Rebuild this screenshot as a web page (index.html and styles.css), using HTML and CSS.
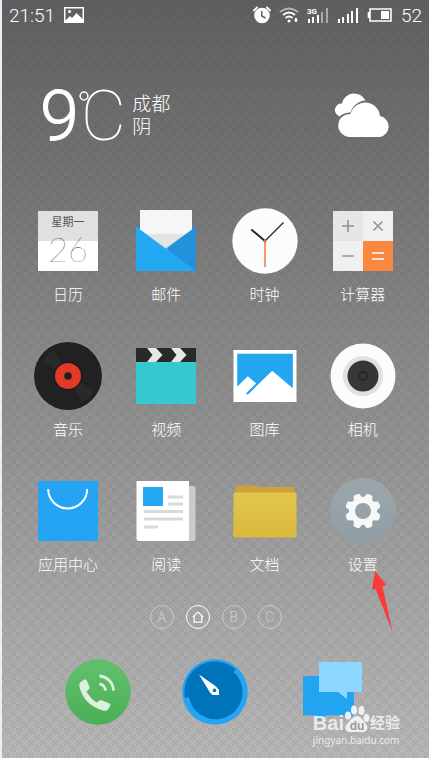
FILE: index.html
```
<!DOCTYPE html>
<html lang="zh-CN">
<head>
    <meta charset="UTF-8">
    <meta name="viewport" content="width=device-width, initial-scale=1.0">
    <title>桌面</title>
    <link rel="stylesheet" href="styles.css">
</head>
<body>
<div class="phone">

    <header class="status-bar">
        <span>21:51</span>
        <svg class="status-image" width="20" height="16" viewBox="0 0 20 16">
            <path fill="#fff" fill-rule="evenodd" d="M0 0h20v16H0zM1.500 1.500v12L6 9l2 2 4.500-5 6 6V1.500z"/>
            <circle cx="5.500" cy="4.500" r="1.500" fill="#fff"/>
        </svg>
        <div class="status-icons">
            <svg width="18" height="18" viewBox="0 0 18 18">
                <circle cx="9" cy="9.500" r="7.800" fill="#fff"/>
                <path d="M1 4.500 4 1.500M17 4.500l-3-3" stroke="#fff" stroke-width="1.800" stroke-linecap="round"/>
                <path d="M8.800 5v5l3.700 2" fill="none" stroke="#646464" stroke-width="1.500"/>
            </svg>
            <svg width="20" height="16" viewBox="0 0 20 16" fill="none" stroke="#fff" stroke-width="1.800">
                <path d="M1 5Q10-2 19 5" opacity=".55"/>
                <path d="M4 8Q10 3 16 8"/>
                <path d="M6.500 11Q10 8 13.500 11"/>
                <circle cx="10" cy="14" r="1.500" fill="#fff" stroke="none"/>
                <path d="M15 13h4l-2 2.500zM16 11h2v2h-2z" fill="#fff" stroke="none"/>
            </svg>
            <svg width="22" height="18" viewBox="0 0 22 18" fill="#fff">
                <text x="0" y="8" class="net-type">3G</text>
                <path d="M1 13h2v4H1zM5 11h2v6H5zM10 9h2v8h-2z"/>
                <path d="M14 6h2v11h-2zM19 2h2v15h-2z" opacity=".45"/>
            </svg>
            <svg width="22" height="18" viewBox="0 0 22 18" fill="#fff">
                <path d="M1 13h2v4H1zM5 11h2v6H5zM10 8h2v9h-2zM14 5h2v12h-2zM19 2h2v15h-2z"/>
            </svg>
            <svg width="26" height="16" viewBox="0 0 26 16">
                <path d="M3 2h21v12H3zM1.500 5v6" fill="none" stroke="#fff" stroke-width="1.600"/>
                <path fill="#fff" d="M14 4h8v8h-8z"/>
            </svg>
            <span>52</span>
        </div>
    </header>

    <section class="weather">
        <div class="temp">9</div>
        <svg class="degree" width="10" height="10" viewBox="0 0 10 10">
            <circle cx="5" cy="5" r="3.900" fill="none" stroke="#fff" stroke-width="1.500"/>
        </svg>
        <div class="unit">C</div>
        <div class="place">成都<br>阴</div>
        <svg class="cloud" width="58" height="48" viewBox="0 0 58 48">
            <path fill="#fff" d="M5 24a6.500 6.500 0 0 1 3-12.500A12.500 12.500 0 0 1 31.500 8.500C25 9 19 13 16.500 20.500 12 20.500 8.500 22 5.500 24.500z"/>
            <path fill="#fff" d="M15 45A11.500 11.500 0 0 1 16.500 22 15 15 0 0 1 46 24 10.700 10.700 0 0 1 46 45z"/>
        </svg>
    </section>

    <main class="apps">
        <a class="app" href="#">
            <svg viewBox="0 0 68 68">
                <path fill="#fff" d="M4 4h60v60H4z"/>
                <path fill="#e0e0e0" d="M4 4h60v30H4z"/>
                <text x="34" y="19" class="cal-week">星期一</text>
                <text x="34" y="55" class="cal-day">26</text>
            </svg>
            <span>日历</span>
        </a>
        <a class="app" href="#">
            <svg viewBox="0 0 68 68">
                <path fill="#2196d9" d="M4 20h60v44H4z"/>
                <path fill="#f5f7f7" d="M8 3h52v40H8z"/>
                <path fill="#e3e3e3" d="M8 27h52v16H8z"/>
                <path fill="#2492da" d="M34 41.500 64 19.500V64z"/>
                <path fill="#22a9f2" d="M4 19.500 64 64H4z"/>
            </svg>
            <span>邮件</span>
        </a>
        <a class="app" href="#">
            <svg viewBox="0 0 68 68">
                <circle cx="34" cy="34" r="32.700" fill="#fbfdfc"/>
                <path d="M34 34v26" stroke="#f09068" stroke-width="1.800"/>
                <path d="M20.300 22.500 34 34" stroke="#222" stroke-width="2"/>
                <path d="M34 34 52.500 15.500" stroke="#333" stroke-width="1.400"/>
                <circle cx="34" cy="34" r="1.500" fill="#e06a38"/>
            </svg>
            <span>时钟</span>
        </a>
        <a class="app" href="#">
            <svg viewBox="0 0 68 68">
                <path fill="#f0f0f0" d="M4 4h60v60H4z"/>
                <path fill="#e6e6e6" d="M4 4h30v30H4z"/>
                <path fill="#f98840" d="M34 34h30v30H34z"/>
                <path d="M13 19h12M19 13v12M13 49h12M44.500 14.500l9 9M53.500 14.500l-9 9" stroke="#8f979c" stroke-width="1.700"/>
                <path d="M43 46h12M43 52h12" stroke="#fff" stroke-width="1.500"/>
            </svg>
            <span>计算器</span>
        </a>

        <a class="app" href="#">
            <svg viewBox="0 0 68 68">
                <circle cx="34" cy="34" r="34" fill="#212121"/>
                <path fill="#292929" d="M34 34 8.500 19.500A30 30 0 0 1 20 8zM34 34 48 61A30 30 0 0 0 60 48z"/>
                <circle cx="34" cy="34" r="14" fill="#181818"/>
                <circle cx="34" cy="34" r="13" fill="#e23a28"/>
                <circle cx="34" cy="34" r="3.800" fill="#212121"/>
            </svg>
            <span>音乐</span>
        </a>
        <a class="app" href="#">
            <svg viewBox="0 0 68 68">
                <path fill="#36c9d0" d="M4 19h60v43H4z"/>
                <path fill="#292927" d="M4 6h60v14H4z"/>
                <path fill="#e6e6e4" d="M15 6h9l6.500 7-6.500 7h-9l5.500-7zM39 6h9l6.500 7-6.500 7h-9l5.500-7z"/>
            </svg>
            <span>视频</span>
        </a>
        <a class="app" href="#">
            <svg viewBox="0 0 68 68">
                <path fill="#fff" d="M2.500 8h63v52h-63z"/>
                <path fill="#22a6f0" d="M6.200 11.700h55.600v34.600L41.200 28.700 16.500 53l-1.300-1.700 10-10-8.400-7L6.200 44.700z"/>
            </svg>
            <span>图库</span>
        </a>
        <a class="app" href="#">
            <svg viewBox="0 0 68 68">
                <circle cx="34" cy="34" r="32.500" fill="#fbfcfc"/>
                <circle cx="34" cy="34" r="20" fill="#e2e0e0"/>
                <circle cx="34" cy="34" r="15.500" fill="#373737"/>
                <circle cx="34" cy="34" r="4" fill="none" stroke="#222" stroke-width="1.500"/>
            </svg>
            <span>相机</span>
        </a>

        <a class="app" href="#">
            <svg viewBox="0 0 68 68">
                <rect x="4" y="4" width="60" height="60" rx="1" fill="#24a4f2"/>
                <path d="M14.200 12a19.500 19.500 0 0 0 39 0" fill="none" stroke="#fff" stroke-width="2"/>
            </svg>
            <span>应用中心</span>
        </a>
        <a class="app" href="#">
            <svg viewBox="0 0 68 68">
                <rect x="50" y="9" width="13.500" height="55" rx="2" fill="#c9cccb"/>
                <path fill="#fff" d="M4.500 4H57v60H6.500a2 2 0 0 1-2-2z"/>
                <path fill="#24a9f2" d="M11 10h20v19H11z"/>
                <path d="M36 20h15M36 27h15M12 34.500h39M12 42h39M12 50h14" stroke="#dadada" stroke-width="2.800"/>
            </svg>
            <span>阅读</span>
        </a>
        <a class="app" href="#">
            <svg viewBox="0 0 68 68">
                <defs>
                    <linearGradient id="folder" x2="0" y2="1">
                        <stop stop-color="#e2c64c"/>
                        <stop offset="1" stop-color="#d9b93c"/>
                    </linearGradient>
                </defs>
                <path fill="#cda23a" d="M4.500 9.500q0-1 1-1H26l2 1.500h34q1.500 0 1.500 1.500V20h-59z"/>
                <rect x="2.500" y="15.500" width="63" height="45" rx="1" fill="url(#folder)"/>
            </svg>
            <span>文档</span>
        </a>
        <a class="app" href="#">
            <svg viewBox="0 0 68 68">
                <defs>
                    <linearGradient id="settings" x2="0" y2="1">
                        <stop stop-color="#9ba6ac"/>
                        <stop offset="1" stop-color="#919da5"/>
                    </linearGradient>
                </defs>
                <circle cx="34" cy="34" r="33" fill="url(#settings)"/>
                <g fill="#f7f8f8" transform="translate(34 34) rotate(22.500)">
                    <path id="teeth" d="M-4.500-13-3-17.500Q0-18.500 3-17.500L4.500-13V13L3 17.500Q0 18.500-3 17.500L-4.500 13z"/>
                    <use href="#teeth" transform="rotate(45)"/>
                    <use href="#teeth" transform="rotate(90)"/>
                    <use href="#teeth" transform="rotate(135)"/>
                    <circle r="14"/>
                </g>
                <circle cx="34" cy="34" r="8" fill="#96a1a8"/>
            </svg>
            <span>设置</span>
            <svg class="pointer" viewBox="0 0 22 62">
                <path fill="#fb3b3a" d="M4 0 15.500 14l-4 1.200L21.500 61 4.500 18 1 19z"/>
            </svg>
        </a>
    </main>

    <nav class="pages">
        <button class="page">A</button>
        <button class="page active" aria-label="主屏">
            <svg width="12" height="12" viewBox="0 0 12 12">
                <path d="M.8 6 6 1l5.200 5M2.200 5v6.200h7.600V5" fill="none" stroke="#fff" stroke-width="1.200"/>
            </svg>
        </button>
        <button class="page">B</button>
        <button class="page">C</button>
    </nav>

    <footer class="dock">
        <a href="#" aria-label="电话">
            <svg viewBox="0 0 68 68">
                <defs>
                    <linearGradient id="call" x2="0" y2="1">
                        <stop stop-color="#62c06c"/>
                        <stop offset="1" stop-color="#4cae58"/>
                    </linearGradient>
                </defs>
                <circle cx="34" cy="34" r="32.700" fill="url(#call)"/>
                <path fill="#dcf1dd" d="M16 24.500 20.500 21.500Q22 21 22.800 22.500L25.500 29Q26 30.500 24.500 31.500L22.500 33.500Q26.500 40.500 32.500 44.500L35.500 42.500Q37 41.500 38.500 42.500L45.500 45.500Q47 46.500 46 48L44 51.500Q42.500 53.500 39 52.500 20 47 15.500 29 15 26 16 24.500z"/>
                <path d="M35.500 18A15 15 0 0 1 49.500 32.500M35.500 26A7 7 0 0 1 41.500 32.500" fill="none" stroke="#dcf1dd" stroke-width="2.800"/>
            </svg>
        </a>
        <a href="#" aria-label="浏览器">
            <svg viewBox="0 0 68 68">
                <circle cx="34" cy="34" r="32.800" fill="#24a4f2"/>
                <path fill="#0074bb" d="M4 40A30.500 30.500 0 0 1 54.500 11.500L52.500 14A27 27 0 1 1 8 39z"/>
                <path fill="#fff" fill-rule="evenodd" d="M18 16.500 35 28.500 38 32V37H31.500L29 34.500zM33.500 30.500a1.800 1.800 0 1 0 .01 0z"/>
            </svg>
        </a>
        <a href="#" aria-label="信息">
            <svg viewBox="0 0 68 68">
                <path fill="#22a4f0" d="M4 18h51v39.500H27L19 63v-5.500H4z"/>
                <path fill="#8dd6ff" d="M20 4h43v30H48v7l-9-7H20z"/>
            </svg>
        </a>
    </footer>

    <div class="watermark">
        <div class="brand">
            <span class="bai">Bai</span>
            <svg width="26" height="28" viewBox="0 0 26 28" fill="#f0f0f0">
                <ellipse cx="4" cy="10.500" rx="3" ry="4"/>
                <ellipse cx="10" cy="5" rx="3" ry="4.500"/>
                <ellipse cx="17.500" cy="5.500" rx="3" ry="4.500"/>
                <ellipse cx="22.500" cy="13" rx="3" ry="4"/>
                <path d="M13 11c4 0 6 5 9 8 3 4 1 8-3 8H6c-5 0-6-5-3-8 4-4 6-8 10-8z"/>
                <text x="13" y="25" class="du">du</text>
            </svg>
            <span class="jingyan">经验</span>
        </div>
        <div class="site">jingyan.baidu.com</div>
    </div>
</div>
</body>
</html>
```
FILE: styles.css
```
* {
    box-sizing: border-box;
}
body {
    margin: 0;
    font-family: Roboto, "Noto Sans CJK SC", sans-serif;
    color: #fff;
}
.phone {
    position: relative;
    min-height: 100vh;
    border-left: 2px solid #e8eefa;
    overflow: hidden;
    background:
        repeating-conic-gradient(rgba(0, 0, 0, 0.03) 0 25%, transparent 0 50%) 0 0 / 4px 4px,
        repeating-conic-gradient(rgba(0, 0, 0, 0.03) 0 25%, transparent 0 50%) 2px 2px / 12px 12px,
        linear-gradient(#616161, #b9b9b9);
}
svg {
    display: block;
    flex: none;
}
a {
    color: inherit;
    text-decoration: none;
}

/* status bar */
.status-bar {
    display: flex;
    align-items: center;
    height: 30px;
    padding: 0 7px;
    font-size: 19px;
    font-weight: 300;
}
.status-image {
    margin-left: 9px;
}
.status-icons {
    display: flex;
    align-items: center;
    gap: 8px;
    margin-left: auto;
}
.net-type {
    font: bold 8px Roboto, sans-serif;
}

/* weather */
.weather {
    display: flex;
    align-items: center;
    height: 72px;
    margin: 50px 37px 55px 38px;
}
.temp,
.unit {
    font-size: 70px;
    line-height: 72px;
}
.temp {
    font-weight: 300;
    -webkit-text-stroke: 1px #fff;
}
.unit {
    margin-left: -8px;
    font-weight: 100;
}
.degree {
    align-self: flex-start;
    margin-top: 11px;
}
.place {
    margin-left: 6px;
    font-size: 19px;
    font-weight: 300;
    line-height: 23px;
}
.cloud {
    margin-left: auto;
}

/* app grid */
.apps {
    display: grid;
    grid-template-columns: repeat(4, 1fr);
    padding: 0 17px;
}
.app {
    position: relative;
    display: flex;
    flex-direction: column;
    align-items: center;
    height: 135px;
    font-size: 15px;
    font-weight: 300;
    line-height: 20px;
}
.app > svg,
.dock svg {
    width: 68px;
    height: 68px;
}
.app > span {
    margin-top: 10px;
}
.cal-week {
    font-size: 11px;
    font-weight: 400;
    text-anchor: middle;
    fill: #555;
}
.cal-day {
    font-family: Lato, sans-serif;
    font-size: 34px;
    font-weight: 100;
    text-anchor: middle;
    fill: #333;
}
.app > .pointer {
    position: absolute;
    top: 94px;
    left: 57px;
    width: 22px;
    height: 62px;
}

/* page dots */
.pages {
    display: flex;
    justify-content: center;
    gap: 12px;
    margin-top: -7px;
}
.page {
    display: flex;
    align-items: center;
    justify-content: center;
    width: 24px;
    height: 24px;
    padding: 0;
    border: 1px solid rgba(255, 255, 255, 0.4);
    border-radius: 50%;
    background: none;
    color: rgba(255, 255, 255, 0.45);
    font-family: Roboto, sans-serif;
    font-size: 14px;
    font-weight: 300;
}
.page.active {
    border-color: #fff;
}

/* dock */
.dock {
    display: grid;
    grid-template-columns: repeat(3, 1fr);
    justify-items: center;
    padding: 29px 37px 32px;
}

/* watermark */
.watermark {
    position: absolute;
    right: 29px;
    bottom: 11px;
    color: rgba(255, 255, 255, 0.75);
}
.brand {
    display: flex;
    align-items: flex-end;
    height: 28px;
}
.bai {
    font: bold 20px/20px "Liberation Sans", sans-serif;
}
.du {
    font: bold 12px "Liberation Sans", sans-serif;
    text-anchor: middle;
    fill: #999;
}
.jingyan {
    font-size: 15px;
    font-weight: 700;
    line-height: 20px;
}
.site {
    font: 10px/14px "Noto Sans", sans-serif;
}
```
